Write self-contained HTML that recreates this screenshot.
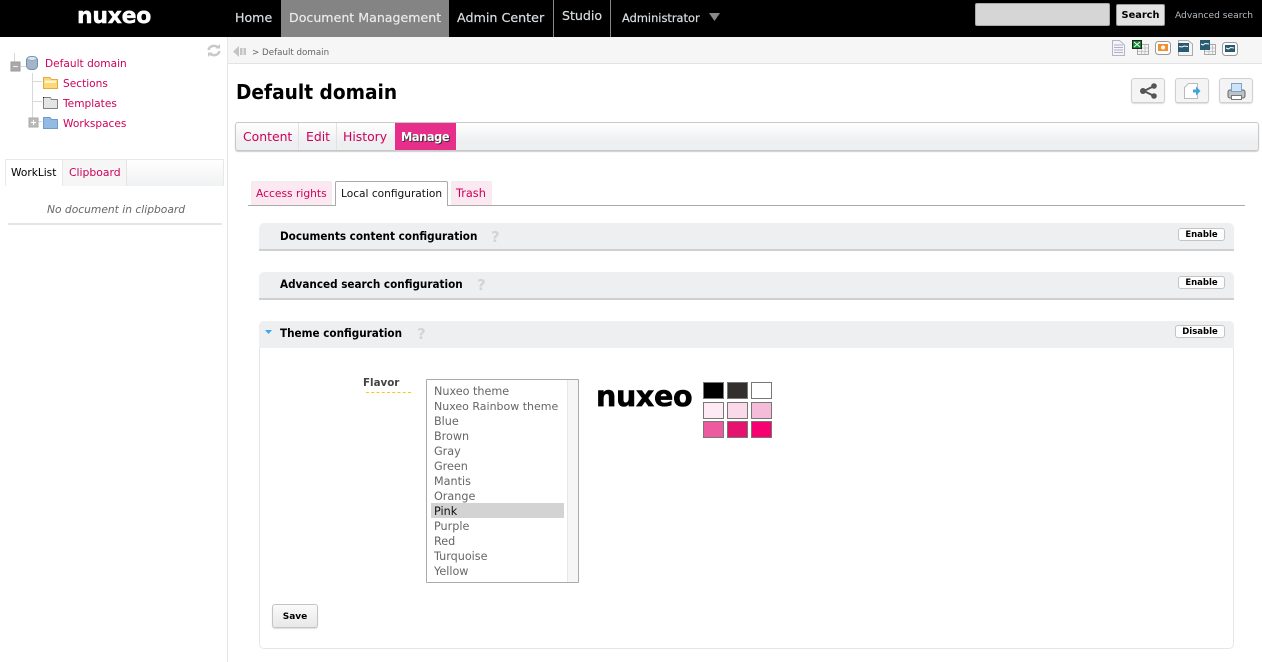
<!DOCTYPE html>
<html><head><meta charset="utf-8"><style>
html,body{margin:0;padding:0;background:#fff}
body{width:1262px;height:662px;overflow:hidden;position:relative;font-family:"DejaVu Sans","Liberation Sans",sans-serif}
.a{position:absolute;box-sizing:border-box}
.t{position:absolute;white-space:nowrap;line-height:16px;height:16px;margin-top:1px;transform-origin:0 50%}
.nav{color:#d9dee2;font-size:12.6px;font-weight:400;-webkit-text-stroke:.2px #d9dee2}
.lnk{color:#cf005a;font-size:10.6px}
.hd{color:#000;font-weight:700;font-size:11.2px;transform:scaleX(.933)}
.opt{color:#666;font-size:11.2px;left:434px}
.q{color:#d4d4d4;font-size:15px;font-weight:700}
.box{background:#eeeff1;border-radius:5px 5px 0 0;left:259px;width:975px}
.btn{background:#fff;border:1px solid #c4c4c4;border-radius:3px;color:#000;font-weight:700;font-size:8.500px;text-align:center;line-height:13px;height:13px}
.sw{width:21px;height:17px;border:1px solid #777}
.ib{background:#f4f4f4;border:1px solid #d0d0d0;border-radius:3px;box-shadow:0 1px 1px #ddd;top:78px;height:25px;width:34px}
</style></head><body>

<!-- top bar -->
<div class="a" style="left:0;top:0;width:1262px;height:37px;background:#000"></div>
<div class="t" style="left:77px;top:3px;height:26px;line-height:26px;color:#fff;font-weight:700;font-size:22px;letter-spacing:-.3px;-webkit-text-stroke:.4px #fff">nuxeo</div>
<div class="a" style="left:281px;top:0;width:168px;height:37px;background:#848484"></div>
<div class="t nav" style="left:235px;top:9px">Home</div>
<div class="t nav" style="left:289px;top:9px;color:#f0f0f0">Document Management</div>
<div class="t nav" style="left:457px;top:9px;font-size:12.7px">Admin Center</div>
<div class="a" style="left:553px;top:0;width:1px;height:37px;background:#888"></div>
<div class="t nav" style="left:562px;top:7px">Studio</div>
<div class="a" style="left:610px;top:0;width:1px;height:37px;background:#888"></div>
<div class="t nav" style="left:622px;top:9px;font-size:11.4px">Administrator</div>
<svg class="a" style="left:709px;top:13px" width="11" height="8"><path d="M0 0H11L5.500 8Z" fill="#8a8a8a"/></svg>
<div class="a" style="left:975px;top:3px;width:135px;height:23px;background:#d6d6d6;border:1px solid #aaa;border-radius:2px"></div>
<div class="a" style="left:1116px;top:4px;width:49px;height:22px;background:#e2e2e2;border:1px solid #999;border-radius:2px;color:#000;font-weight:700;font-size:9.800px;line-height:21px;text-align:center">Search</div>
<div class="t" style="left:1175px;top:7px;color:#b4bcc4;font-size:9.100px">Advanced search</div>

<!-- sidebar -->
<div class="a" style="left:227px;top:37px;width:1px;height:625px;background:#e6e6e6"></div>
<svg class="a" style="left:0;top:37px" width="227" height="100" fill="none">
<path d="M14.500 16V28M21 29.500H26M32.500 36V90M33 44.500H42M33 64.500H42M37 84.500H42" stroke="#d8d8d8"/>
<rect x="11" y="25" width="9" height="9" fill="#aaa" stroke="#999"/><path d="M13 29.500H18" stroke="#eee"/>
<rect x="29" y="81" width="9" height="9" fill="#bbb" stroke="#aaa"/><path d="M31 85.500H36M33.500 83V88" stroke="#fff"/>
<rect x="26.500" y="19.500" width="11" height="13" rx="4" fill="#a9b4c0" stroke="#5b92c8"/><ellipse cx="32" cy="21.500" rx="4.500" ry="1.800" fill="#dfe6ee" stroke="#7aa3cc" stroke-width=".6"/>
<path d="M43.500 40.500H50l1.500 2H57.500V51.500H43.500Z" fill="#fbd975" stroke="#e5a94a"/><path d="M45 43.500H56V46H45Z" fill="#fff3c8"/>
<path d="M43.500 60.500H50l1.500 2H57.500V71.500H43.500Z" fill="#e4e4e4" stroke="#111" stroke-dasharray="1 1"/>
<path d="M43.500 80.500H50l1.500 2H57.500V91.500H43.500Z" fill="#92bae3" stroke="#6b9ccc"/>
<g transform="translate(207 7)" stroke="#c8c8c8" stroke-width="2.400"><path d="M1.500 6A5.500 5 0 0 1 11 3.500"/><path d="M12.500 7A5.500 5 0 0 1 3 9.500"/><path d="M8.500 4.500H13V0Z" fill="#c8c8c8" stroke="none"/><path d="M5.500 8.500H1V13Z" fill="#c8c8c8" stroke="none"/></g>
</svg>
<div class="t lnk" style="left:45px;top:55px">Default domain</div>
<div class="t lnk" style="left:63px;top:75px">Sections</div>
<div class="t lnk" style="left:63px;top:95px">Templates</div>
<div class="t lnk" style="left:63px;top:115px">Workspaces</div>

<div class="a" style="left:5px;top:159px;width:219px;height:27px;border:1px solid #e8e8e8;border-bottom:0;background:linear-gradient(#fff,#f0f1f2)"></div>
<div class="a" style="left:5px;top:159px;width:58px;height:27px;background:#fff;border:1px solid #e8e8e8;border-bottom:0"></div>
<div class="a" style="left:63px;top:160px;width:64px;height:26px;background:#f6f6f7;border-right:1px solid #e4e4e4"></div>
<div class="t" style="left:11px;top:164px;font-size:10.6px;color:#000">WorkList</div>
<div class="t lnk" style="left:69px;top:164px;font-size:10.8px">Clipboard</div>
<div class="t" style="left:47px;top:201px;font-size:10.7px;font-style:italic;color:#666">No document in clipboard</div>
<div class="a" style="left:8px;top:223px;width:214px;height:2px;background:#e6e6e6"></div>

<!-- breadcrumb -->
<div class="a" style="left:228px;top:37px;width:1034px;height:27px;background:#f6f6f6;border-bottom:1px solid #e3e3e3"></div>
<svg class="a" style="left:233px;top:45px" width="14" height="13"><path d="M0 6.500L6 1V12Z" fill="#c4c4c4"/><rect x="7" y="3" width="2.500" height="7" fill="#c4c4c4"/><rect x="10.500" y="3" width="2.500" height="7" fill="#c4c4c4"/></svg>
<div class="t" style="left:252px;top:44px;font-size:8.700px;color:#666">&gt; Default domain</div>
<svg class="a" style="left:1110px;top:38px" width="130" height="20" fill="none">
<path d="M2.500 2.500H9.500L14.500 7V17.500H2.500Z" fill="#f4f4fa" stroke="#b4b4c8"/><path d="M4 7H13M4 9.500H13M4 12H13M4 14.500H13" stroke="#9a9ab0" stroke-width=".8"/>
<rect x="27.500" y="6.500" width="11" height="10" fill="#f4f4f4" stroke="#aaa"/><path d="M28 10H38M28 13.500H38M31.500 7V16M35 7V16" stroke="#bbb" stroke-width=".8"/>
<rect x="22.500" y="2.500" width="9" height="8" fill="#0a8a2a" stroke="#222"/><path d="M24 4L30 9M30 4L24 9" stroke="#fff"/>
<rect x="45.500" y="3.500" width="15" height="13" rx="3" fill="#fff" stroke="#999"/><rect x="48" y="6" width="10" height="7" fill="#f09030"/><circle cx="53" cy="9.500" r="2" fill="#fff"/>
<path d="M68.500 2.500H78L82.500 6V17.500H68.500Z" fill="#f4f4f4" stroke="#aaa"/><rect x="68" y="5" width="11" height="9" fill="#285a72"/><path d="M69 8.500L72 9L74 8L78 8.500" stroke="#fff"/>
<rect x="94.500" y="6.500" width="11" height="10" fill="#f4f4f4" stroke="#aaa"/><path d="M95 10H105M95 13.500H105M99 7V16M102.500 7V16" stroke="#bbb" stroke-width=".8"/>
<rect x="90" y="2" width="10" height="10" fill="#285a72"/><path d="M91 6L93 7L95 5.500L99 6" stroke="#fff"/>
<rect x="112.500" y="4.500" width="15" height="13" rx="3" fill="#fff" stroke="#999"/><rect x="115" y="7" width="10" height="7" fill="#285a72"/><path d="M116 10L118.500 11L120.500 9.500L124 10" stroke="#fff"/>
</svg>

<!-- title -->
<div class="t" style="left:235.500px;top:78px;height:26px;line-height:26px;font-size:20.2px;font-weight:700;color:#000;transform:scaleX(.92)">Default domain</div>
<div class="a ib" style="left:1131px"></div>
<div class="a ib" style="left:1175px"></div>
<div class="a ib" style="left:1219px"></div>
<svg class="a" style="left:1131px;top:78px" width="122" height="26" fill="none">
<path d="M13 13L23 8M13 13L23 18" stroke="#555" stroke-width="2"/><circle cx="12" cy="13" r="3" fill="#555"/><circle cx="23" cy="8" r="2.800" fill="#555"/><circle cx="23" cy="18" r="2.800" fill="#555"/>
<path d="M53.500 9.500L57.500 5.500H66.500V20.500H53.500Z" fill="#fff" stroke="#bbb"/><path d="M62 11.500H65V8.500L69.500 13L65 17.500V14.500H62Z" fill="#3ea6dc"/>
<rect x="97" y="12" width="17" height="8" rx="2" fill="#bcc2c8" stroke="#666"/><rect x="100.500" y="5.500" width="10" height="8" fill="#cfe2f6" stroke="#7aa3cc"/><rect x="100.500" y="17.500" width="10" height="4" fill="#fff" stroke="#777"/>
</svg>

<!-- tabs -->
<div class="a" style="left:235px;top:122px;width:1024px;height:29px;border:1px solid #c8c8c8;border-radius:3px;background:linear-gradient(#fff,#eeeff1 70%);box-shadow:0 1px 1px #ccc"></div>
<div class="a" style="left:298px;top:123px;width:1px;height:27px;background:#e2e2e2"></div>
<div class="a" style="left:336px;top:123px;width:1px;height:27px;background:#e2e2e2"></div>
<div class="a" style="left:395px;top:123px;width:61px;height:27px;background:#e62e8a"></div>
<div class="t" style="left:243px;top:128px;color:#cf005a;font-size:12.4px">Content</div>
<div class="t" style="left:306px;top:128px;color:#cf005a;font-size:12.4px">Edit</div>
<div class="t" style="left:343px;top:128px;color:#cf005a;font-size:12.4px">History</div>
<div class="t" style="left:401px;top:128px;color:#fff;font-size:12.2px;font-weight:700;letter-spacing:-.4px;text-shadow:1px 1px 0 #333;transform:scaleX(.93)">Manage</div>

<!-- sub tabs -->
<div class="a" style="left:248px;top:205px;width:997px;height:1px;background:#aaa"></div>
<div class="a" style="left:251px;top:181px;width:81px;height:24px;background:#fce8f0;border:1px solid #eee;border-bottom:0;border-radius:2px 2px 0 0"></div>
<div class="a" style="left:335px;top:181px;width:113px;height:25px;background:#fff;border:1px solid #aaa;border-bottom:0;border-radius:2px 2px 0 0"></div>
<div class="a" style="left:451px;top:181px;width:41px;height:24px;background:#fce8f0;border:1px solid #eee;border-bottom:0;border-radius:2px 2px 0 0"></div>
<div class="t lnk" style="left:256px;top:185px;font-size:10.7px">Access rights</div>
<div class="t" style="left:341px;top:185px;font-size:10.6px;color:#111">Local configuration</div>
<div class="t lnk" style="left:456px;top:185px;font-size:11.3px">Trash</div>

<!-- boxes -->
<div class="a box" style="top:223px;height:28px;border-bottom:2px solid #d0d0d0"></div>
<div class="a box" style="top:272px;height:28px;border-bottom:2px solid #d0d0d0"></div>
<div class="a" style="left:259px;top:321px;width:975px;height:328px;border:1px solid #e6e6e6;border-radius:5px"></div>
<div class="a box" style="top:321px;height:27px"></div>
<div class="t hd" style="left:279.500px;top:228px">Documents content configuration</div>
<div class="t hd" style="left:279.500px;top:276px">Advanced search configuration</div>
<div class="t hd" style="left:279.500px;top:325px">Theme configuration</div>
<div class="t q" style="left:491px;top:228px">?</div>
<div class="t q" style="left:477px;top:276px">?</div>
<div class="t q" style="left:417px;top:325px">?</div>
<svg class="a" style="left:265px;top:330px" width="7" height="4"><path d="M0 0H7L3.500 4Z" fill="#3ea6f0"/></svg>
<div class="a btn" style="left:1178px;top:228px;width:47px">Enable</div>
<div class="a btn" style="left:1178px;top:276px;width:47px">Enable</div>
<div class="a btn" style="left:1175px;top:325px;width:50px">Disable</div>

<!-- flavor -->
<div class="t" style="left:363px;top:374px;font-size:10.3px;font-weight:700;color:#444">Flavor</div>
<div class="a" style="left:366px;top:392px;width:45px;border-top:1px dashed #f7c815"></div>
<div class="a" style="left:426px;top:379px;width:153px;height:204px;border:1px solid #aaa;border-radius:1px"></div>
<div class="a" style="left:567px;top:380px;width:11px;height:202px;background:#f6f6f6;border-left:1px solid #e8e8e8"></div>
<div class="a" style="left:431px;top:503px;width:133px;height:15px;background:#d3d3d3"></div>
<div class="t opt" style="top:383px">Nuxeo theme</div>
<div class="t opt" style="top:398px;font-size:11px">Nuxeo Rainbow theme</div>
<div class="t opt" style="top:413px">Blue</div>
<div class="t opt" style="top:428px">Brown</div>
<div class="t opt" style="top:443px">Gray</div>
<div class="t opt" style="top:458px">Green</div>
<div class="t opt" style="top:473px">Mantis</div>
<div class="t opt" style="top:488px">Orange</div>
<div class="t opt" style="top:503px;color:#111">Pink</div>
<div class="t opt" style="top:518px">Purple</div>
<div class="t opt" style="top:533px">Red</div>
<div class="t opt" style="top:548px">Turquoise</div>
<div class="t opt" style="top:563px">Yellow</div>

<div class="t" style="left:596px;top:377px;height:36px;line-height:36px;color:#000;font-weight:700;font-size:28.6px;letter-spacing:-.4px;-webkit-text-stroke:.5px #000">nuxeo</div>
<div class="a sw" style="left:703px;top:382px;background:#000"></div>
<div class="a sw" style="left:727px;top:382px;background:#332f2f"></div>
<div class="a sw" style="left:751px;top:382px;background:#fff"></div>
<div class="a sw" style="left:703px;top:402px;background:#fdeaf4"></div>
<div class="a sw" style="left:727px;top:402px;background:#f9d9ea"></div>
<div class="a sw" style="left:751px;top:402px;background:#f5bcd9"></div>
<div class="a sw" style="left:703px;top:421px;background:#ee5a9e"></div>
<div class="a sw" style="left:727px;top:421px;background:#e5126f"></div>
<div class="a sw" style="left:751px;top:421px;background:#f7006f"></div>

<div class="a" style="left:272px;top:604px;width:46px;height:24px;background:linear-gradient(#fafafa,#e8e8e8);border:1px solid #c4c4c4;border-radius:3px;box-shadow:0 1px 1px #ddd;color:#000;font-weight:700;font-size:9px;line-height:24px;text-align:center">Save</div>
</body></html>
